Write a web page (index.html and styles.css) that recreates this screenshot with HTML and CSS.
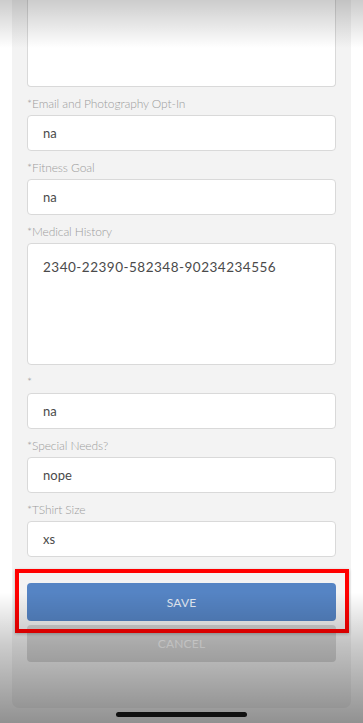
FILE: index.html
```html
<!DOCTYPE html>
<html lang="en">
<head>
    <meta charset="UTF-8">
    <meta name="viewport" content="width=device-width, initial-scale=1.0">
    <title>Edit Member</title>
    <link rel="stylesheet" href="styles.css">
</head>
<body>
    <div class="screen">
        <form class="panel">
            <div class="field field-cut"></div>

            <label class="field-label">*Email and Photography Opt-In</label>
            <div class="field">na</div>

            <label class="field-label">*Fitness Goal</label>
            <div class="field">na</div>

            <label class="field-label">*Medical History</label>
            <div class="field field-area">2340-22390-582348-90234234556</div>

            <label class="field-label">*</label>
            <div class="field">na</div>

            <label class="field-label">*Special Needs?</label>
            <div class="field">nope</div>

            <label class="field-label">*TShirt Size</label>
            <div class="field">xs</div>

            <div class="actions">
                <button type="button" class="btn btn-save">SAVE</button>
                <button type="button" class="btn btn-cancel">CANCEL</button>
                <div class="highlight"></div>
            </div>
        </form>

        <div class="shade-top"></div>
        <div class="shade-bottom"></div>
        <div class="home-bar"></div>
    </div>
</body>
</html>
```

FILE: styles.css
```css
html, body {
    margin: 0;
    padding: 0;
}
body {
    font-family: Lato, "Open Sans", Arial, sans-serif;
    background-color: #ffffff;
}
.screen {
    position: relative;
    width: 363px;
    height: 723px;
    overflow: hidden;
}
.panel {
    display: flex;
    flex-direction: column;
    margin: 0 12px;
    padding: 0 15px 46px;
    background-color: #f3f3f3;
    border-radius: 0 0 7px 7px;
}
.field-label {
    display: block;
    padding-top: 10px;
    margin-bottom: 4px;
    height: 14px;
    line-height: 14px;
    font-size: 12px;
    font-weight: 300;
    color: #9c9c9c;
    letter-spacing: -0.1px;
}
.field {
    box-sizing: border-box;
    height: 36px;
    padding: 0 15px;
    line-height: 34px;
    font-size: 13px;
    color: #4a4a4a;
    background: #ffffff;
    border: 1px solid #d9d9d9;
    border-radius: 4px;
}
.field-cut {
    height: 87px;
    border-top: none;
    border-radius: 0 0 4px 4px;
}
.field-area {
    height: 122px;
    padding-top: 7px;
    line-height: 32px;
    font-size: 13.5px;
    letter-spacing: 0.5px;
}
.actions {
    position: relative;
    display: flex;
    flex-direction: column;
    gap: 4px;
    margin-top: 26px;
}
.btn {
    height: 38px;
    border: none;
    border-radius: 4px;
    font-family: inherit;
    font-size: 12px;
    letter-spacing: 0.2px;
}
.btn-save {
    background-color: #5584c4;
    color: #e4ebf5;
}
.btn-cancel {
    height: 37px;
    background-color: #d3d3d3;
    color: #f0f0f0;
}
.highlight {
    position: absolute;
    top: -14px;
    left: -12px;
    right: -13px;
    height: 56px;
    border: 4px solid #ff0000;
    box-shadow: 0 1px 3px rgba(0,0,0,0.25);
}
.shade-top {
    position: absolute;
    top: 0;
    left: 0;
    right: 0;
    height: 48px;
    background: linear-gradient(rgba(0,0,0,0.2), rgba(0,0,0,0));
    pointer-events: none;
}
.shade-bottom {
    position: absolute;
    top: 592px;
    left: 0;
    right: 0;
    bottom: 0;
    background: linear-gradient(rgba(0,0,0,0), rgba(0,0,0,0.2) 40%, rgba(0,0,0,0.43));
    pointer-events: none;
}
.home-bar {
    position: absolute;
    left: 116px;
    width: 131px;
    top: 712px;
    height: 5px;
    border-radius: 3px;
    background-color: #111111;
}
```
